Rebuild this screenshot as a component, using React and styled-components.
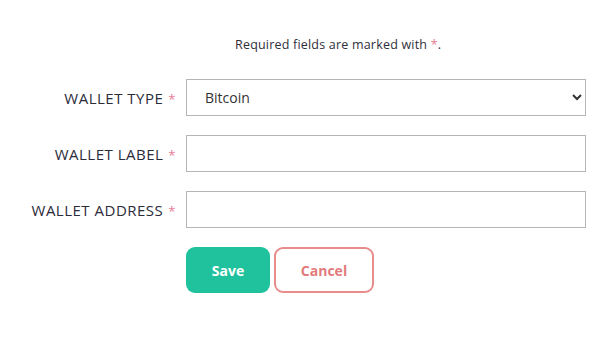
import React from 'react';
import styled, { createGlobalStyle } from 'styled-components';

const GlobalStyle = createGlobalStyle`
  body {
    margin: 0;
    background: #ffffff;
    font-family: "Open Sans", Lato, sans-serif;
  }
`;

const Page = styled.div`
  width: 615px;
  height: 338px;
  padding-top: 36px;
  box-sizing: border-box;
`;

const Notice = styled.p`
  margin: 0 0 26px 0;
  padding-left: 235px;
  font-size: 12.5px;
  letter-spacing: 0.2px;
  line-height: 17px;
  color: #2f2f3a;
`;

const Star = styled.span`
  color: #e57d92;
  font-size: ${props => (props.gap ? '13px' : 'inherit')};
  margin-left: ${props => (props.gap ? '5px' : '0')};
`;

const Form = styled.form`
  display: grid;
  grid-template-columns: 176px 400px;
  column-gap: 10px;
  row-gap: 19px;
  align-items: center;
`;

const Label = styled.label`
  text-align: right;
  font-size: 15px;
  letter-spacing: 0.5px;
  color: #2b2b3a;
  white-space: nowrap;
`;

const Select = styled.select`
  height: 37px;
  width: 400px;
  border: 1px solid #b5b5b5;
  background: #fff;
  padding: 0 8px 0 14px;
  font-family: inherit;
  font-size: 14px;
  color: #333;
  box-sizing: border-box;
  border-radius: 0;
`;

const Input = styled.input`
  height: 37px;
  width: 400px;
  border: 1px solid #b5b5b5;
  box-sizing: border-box;
  padding: 0 14px;
  font-family: inherit;
  font-size: 14px;
`;

const Actions = styled.div`
  grid-column: 2;
  display: flex;
  gap: 4px;
`;

const Button = styled.button`
  height: 46px;
  width: ${props => (props.cancel ? '100px' : '84px')};
  border-radius: 9px;
  font-family: inherit;
  font-size: 14px;
  font-weight: 700;
  box-sizing: border-box;
  cursor: pointer;
  background: ${props => (props.cancel ? '#ffffff' : '#1fc29c')};
  color: ${props => (props.cancel ? '#e27b7b' : '#ffffff')};
  border: ${props => (props.cancel ? '2px solid #e98c8c' : 'none')};
`;

export default function App() {
  return (
    <Page>
      <GlobalStyle />
      <Notice>
        Required fields are marked with <Star>*</Star>.
      </Notice>
      <Form onSubmit={e => e.preventDefault()}>
        <Label>
          WALLET TYPE<Star gap>*</Star>
        </Label>
        <Select defaultValue="btc">
          <option value="btc">Bitcoin</option>
          <option value="eth">Ethereum</option>
        </Select>
        <Label>
          WALLET LABEL<Star gap>*</Star>
        </Label>
        <Input />
        <Label>
          WALLET ADDRESS<Star gap>*</Star>
        </Label>
        <Input />
        <Actions>
          <Button type="submit">Save</Button>
          <Button type="button" cancel>Cancel</Button>
        </Actions>
      </Form>
    </Page>
  );
}
